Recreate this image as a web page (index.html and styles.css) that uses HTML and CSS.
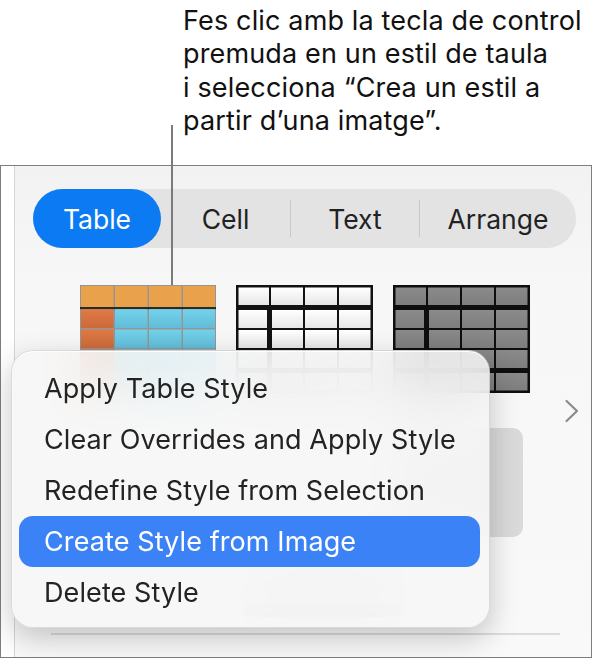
FILE: index.html
```html
<!DOCTYPE html>
<html lang="ca">
<head>
<meta charset="utf-8">
<title>Table styles</title>
<link rel="stylesheet" href="styles.css">
</head>
<body>
<p class="caption">Fes clic amb la tecla de control<br>premuda en un estil de taula<br>i selecciona “Crea un estil a<br>partir d’una imatge”.</p>
<div class="callout-line"></div>
<div class="panel">
  <div class="inner">
    <div class="tabs">
      <span class="tab active">Table</span>
      <span class="tab cell">Cell</span>
      <span class="sep"></span>
      <span class="tab text">Text</span>
      <span class="sep"></span>
      <span class="tab arrange">Arrange</span>
    </div>
    <div class="styles-area">
      <div class="grid">
        <div class="gallery">
          <svg class="thumb t1" width="136" height="108" viewBox="0 0 136 108">
            <defs>
              <linearGradient id="gBlue" x1="0" y1="0" x2="0" y2="1"><stop offset="0" stop-color="#74d2ea"/><stop offset="1" stop-color="#62bcd8"/></linearGradient>
              <linearGradient id="gOr" x1="0" y1="0" x2="0" y2="1"><stop offset="0" stop-color="#e07a45"/><stop offset="1" stop-color="#cc6a3b"/></linearGradient>
            </defs>
            <rect x="0" y="0" width="136" height="108" fill="#959595"/>
            <g fill="#e9a14c">
              <rect x="1" y="1" width="32.5" height="21"/><rect x="35" y="1" width="32.5" height="21"/><rect x="69" y="1" width="32.5" height="21"/><rect x="103" y="1" width="32" height="21"/>
            </g>
            <rect x="0" y="22" width="136" height="2.2" fill="#2a2a2a"/>
            <g fill="url(#gOr)">
              <rect x="1" y="24.2" width="32.5" height="18.8"/><rect x="1" y="44.5" width="32.5" height="18.5"/><rect x="1" y="64.5" width="32.5" height="18.5"/><rect x="1" y="84.5" width="32.5" height="22.5"/>
            </g>
            <g fill="url(#gBlue)">
              <rect x="35" y="24.2" width="32.5" height="18.8"/><rect x="69" y="24.2" width="32.5" height="18.8"/><rect x="103" y="24.2" width="32" height="18.8"/>
              <rect x="35" y="44.5" width="32.5" height="18.5"/><rect x="69" y="44.5" width="32.5" height="18.5"/><rect x="103" y="44.5" width="32" height="18.5"/>
              <rect x="35" y="64.5" width="32.5" height="18.5"/><rect x="69" y="64.5" width="32.5" height="18.5"/><rect x="103" y="64.5" width="32" height="18.5"/>
              <rect x="35" y="84.5" width="32.5" height="22.5"/><rect x="69" y="84.5" width="32.5" height="22.5"/><rect x="103" y="84.5" width="32" height="22.5"/>
            </g>
          </svg>
          <svg class="thumb t2" width="137" height="108" viewBox="0 0 137 108">
            <defs>
              <linearGradient id="gW" x1="0" y1="0" x2="0" y2="1"><stop offset="0" stop-color="#ffffff"/><stop offset="1" stop-color="#e6e6e6"/></linearGradient>
            </defs>
            <rect x="0" y="0" width="137" height="108" fill="#121212"/>
            <g fill="url(#gW)">
              <rect x="2.5" y="2.5" width="30.5" height="17.5"/><rect x="35" y="2.5" width="32" height="17.5"/><rect x="69" y="2.5" width="32" height="17.5"/><rect x="103" y="2.5" width="31.5" height="17.5"/>
              <rect x="2.5" y="25" width="28.5" height="18"/><rect x="36" y="25" width="31" height="18"/><rect x="69" y="25" width="32" height="18"/><rect x="103" y="25" width="31.5" height="18"/>
              <rect x="2.5" y="45" width="28.5" height="18"/><rect x="36" y="45" width="31" height="18"/><rect x="69" y="45" width="32" height="18"/><rect x="103" y="45" width="31.5" height="18"/>
              <rect x="2.5" y="65" width="28.5" height="18"/><rect x="36" y="65" width="31" height="18"/><rect x="69" y="65" width="32" height="18"/><rect x="103" y="65" width="31.5" height="18"/>
              <rect x="2.5" y="88" width="28.5" height="17.5"/><rect x="36" y="88" width="31" height="17.5"/><rect x="69" y="88" width="32" height="17.5"/><rect x="103" y="88" width="31.5" height="17.5"/>
            </g>
          </svg>
          <svg class="thumb t3" width="137" height="108" viewBox="0 0 137 108">
            <defs>
              <linearGradient id="gG" x1="0" y1="0" x2="0" y2="1"><stop offset="0" stop-color="#8a8a8a"/><stop offset="1" stop-color="#7e7e7e"/></linearGradient>
            </defs>
            <rect x="0" y="0" width="137" height="108" fill="#0e0e0e"/>
            <g fill="url(#gG)">
              <rect x="2.5" y="2.5" width="30.5" height="17.5"/><rect x="35" y="2.5" width="32" height="17.5"/><rect x="69" y="2.5" width="32" height="17.5"/><rect x="103" y="2.5" width="31.5" height="17.5"/>
              <rect x="2.5" y="25" width="28.5" height="18"/><rect x="36" y="25" width="31" height="18"/><rect x="69" y="25" width="32" height="18"/><rect x="103" y="25" width="31.5" height="18"/>
              <rect x="2.5" y="45" width="28.5" height="18"/><rect x="36" y="45" width="31" height="18"/><rect x="69" y="45" width="32" height="18"/><rect x="103" y="45" width="31.5" height="18"/>
              <rect x="2.5" y="65" width="28.5" height="18"/><rect x="36" y="65" width="31" height="18"/><rect x="69" y="65" width="32" height="18"/><rect x="103" y="65" width="31.5" height="18"/>
              <rect x="2.5" y="88" width="28.5" height="17.5"/><rect x="36" y="88" width="31" height="17.5"/><rect x="69" y="88" width="32" height="17.5"/><rect x="103" y="88" width="31.5" height="17.5"/>
            </g>
          </svg>
        </div>
        <div class="row2">
          <div class="placeholder"></div>
        </div>
      </div>
      <div class="chevron">
        <svg width="16" height="24" viewBox="0 0 16 24"><polyline points="2.5,2 13,12 2.5,22" fill="none" stroke="#8a8a8a" stroke-width="2.2" stroke-linecap="round" stroke-linejoin="round"/></svg>
      </div>
    </div>
    <div class="labels">
      <span class="blob b1"></span>
      <span class="blob b2"></span>
    </div>
    <div class="divider"></div>
  </div>
  <div class="menu">
    <div class="item">Apply Table Style</div>
    <div class="item">Clear Overrides and Apply Style</div>
    <div class="item">Redefine Style from Selection</div>
    <div class="item selected">Create Style from Image</div>
    <div class="item">Delete Style</div>
  </div>
</div>
</body>
</html>
```

FILE: styles.css
```css
* { box-sizing: border-box; }

html, body {
  margin: 0;
  padding: 0;
  background: #ffffff;
}

body {
  width: 593px;
  height: 659px;
  position: relative;
  overflow: hidden;
  font-family: Inter, "Liberation Sans", Arial, sans-serif;
  color: #1d1d1f;
}

.caption {
  margin: 0;
  height: 165px;
  padding: 4px 0 0 183px;
  font-size: 27px;
  line-height: 33.4px;
  color: #111111;
  letter-spacing: 0.15px;
}

.callout-line {
  position: absolute;
  left: 171px;
  top: 125px;
  width: 2px;
  height: 160px;
  background: #7b7b7b;
  z-index: 5;
}

.panel {
  position: relative;
  width: 592px;
  height: 493px;
  border: 1px solid #7e7e7e;
  background: #ffffff;
}

.inner {
  margin-left: 13px;
  height: 100%;
  border-left: 1px solid #d6d6d6;
  background: linear-gradient(#f2f2f2 0px, #f7f7f7 120px, #f9f9f9 100%);
  padding-top: 23px;
}

.tabs {
  margin-left: 18px;
  width: 543px;
  height: 59px;
  display: flex;
  align-items: center;
  background: #e3e3e3;
  border-radius: 29px;
  font-size: 26.5px;
  color: #222222;
}

.tab {
  display: flex;
  align-items: center;
  justify-content: center;
  height: 100%;
}

.tab.active {
  width: 128px;
  background: #0c7bf3;
  color: #ffffff;
  border-radius: 30px;
}

.tab.cell { width: 129px; }
.tab.text { width: 128px; }
.tab.arrange { width: 156px; }

.sep {
  width: 1px;
  height: 37px;
  background: #c8c8c8;
}

.styles-area {
  display: flex;
  align-items: center;
  margin-top: 37px;
}

.grid {
  margin-left: 65px;
  display: flex;
  flex-direction: column;
  gap: 35px;
}

.gallery {
  display: flex;
  gap: 20px;
}

.thumb { display: block; }

.row2 {
  display: flex;
  padding-left: 313px;
}

.placeholder {
  width: 130px;
  height: 109px;
  border-radius: 10px;
  background: #dadada;
}

.chevron {
  margin-left: 34px;
  display: flex;
  align-items: center;
}

.chevron svg { display: block; }

.labels {
  margin-top: 38px;
  height: 54px;
  display: flex;
  flex-direction: column;
  align-items: center;
  gap: 14px;
  padding-left: 40px;
}

.blob {
  display: block;
  height: 14px;
  border-radius: 7px;
  background: #c4c4c4;
}

.b1 { width: 130px; }
.b2 { width: 160px; }

.divider {
  margin: 4px 0 0 36px;
  width: 509px;
  height: 1.5px;
  background: #dcdcdc;
}

.menu {
  position: absolute;
  left: 10px;
  top: 184px;
  width: 479px;
  height: 278px;
  padding: 12px 9px 10px 7px;
  border-radius: 22px;
  background: rgba(247, 247, 247, 0.86);
  -webkit-backdrop-filter: blur(26px);
  backdrop-filter: blur(26px);
  border: 1px solid rgba(0, 0, 0, 0.12);
  box-shadow: 0 10px 30px rgba(0, 0, 0, 0.22), inset 0 1px 0 rgba(255, 255, 255, 0.9);
  z-index: 10;
  font-size: 27px;
  color: #232323;
}

.item {
  height: 51px;
  display: flex;
  align-items: center;
  padding-left: 25px;
  border-radius: 14px;
  letter-spacing: 0.1px;
}

.item.selected {
  background: #3b82f7;
  color: #ffffff;
}
```
